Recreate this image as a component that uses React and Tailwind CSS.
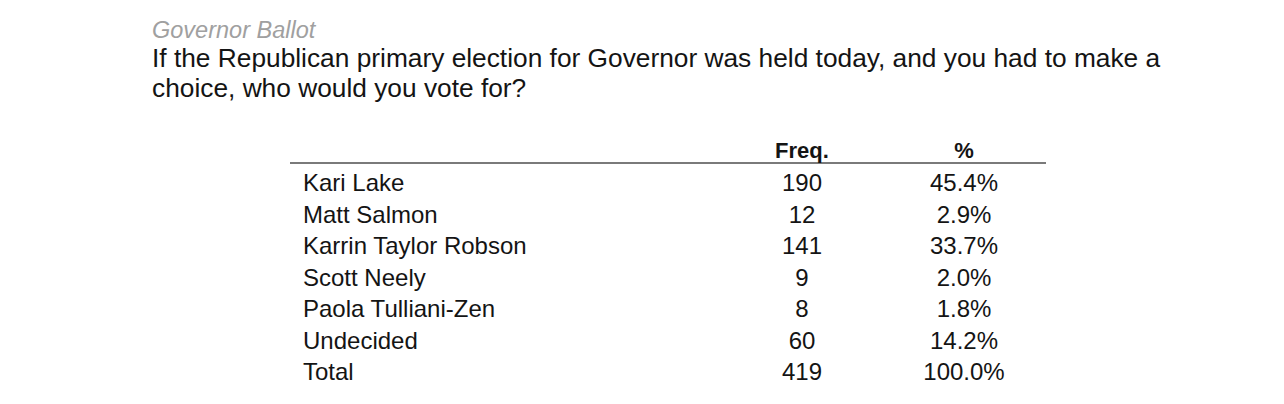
const rows = [
  ["Kari Lake", "190", "45.4%"],
  ["Matt Salmon", "12", "2.9%"],
  ["Karrin Taylor Robson", "141", "33.7%"],
  ["Scott Neely", "9", "2.0%"],
  ["Paola Tulliani-Zen", "8", "1.8%"],
  ["Undecided", "60", "14.2%"],
  ["Total", "419", "100.0%"],
]

export default function App() {
  return (
    <div className="h-[404px] w-[1284px] bg-white pl-[152px] pt-[17px] text-[#141414] font-['Liberation_Sans',Arial,sans-serif]">
      <div className="text-[23.5px] leading-[26px] italic text-[#a0a0a0]">Governor Ballot</div>
      <div className="text-[26.3px] leading-[30px]">
        If the Republican primary election for Governor was held today, and you had to make a
        <br />
        choice, who would you vote for?
      </div>

      <div className="ml-[138px] mt-[37px] w-[756px]">
        <div className="grid grid-cols-[432px_160px_164px] border-b-2 border-[#7a7a7a] text-[22px] font-bold leading-[22px]">
          <div />
          <div className="text-center">Freq.</div>
          <div className="text-center">%</div>
        </div>
        <div className="mt-[3px]">
          {rows.map(([name, freq, pct]) => (
            <div key={name} className="grid grid-cols-[432px_160px_164px] text-[24px] leading-[31.5px]">
              <div className="pl-[13px]">{name}</div>
              <div className="text-center">{freq}</div>
              <div className="text-center">{pct}</div>
            </div>
          ))}
        </div>
      </div>
    </div>
  )
}
